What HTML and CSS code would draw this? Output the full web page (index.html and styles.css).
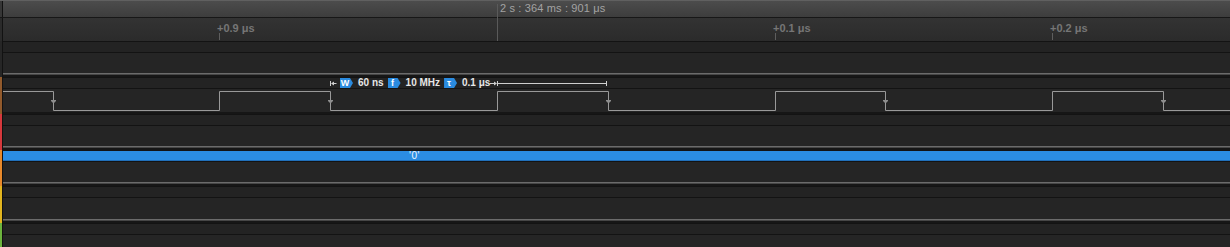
FILE: index.html
```html
<!DOCTYPE html>
<html>
<head>
<meta charset="utf-8">
<link rel="stylesheet" href="styles.css">
</head>
<body>
<div class="screen">
  <div class="hdr">
    <div class="strip"></div>
    <div class="hdr-body"><span class="hdr-time">2 s : 364 ms : 901 μs</span></div>
  </div>
  <div class="ruler">
    <div class="strip"></div>
    <div class="ruler-body"></div>
    <span class="mark" style="--x:219px">+0.9 μs</span>
    <span class="mark" style="--x:775px">+0.1 μs</span>
    <span class="mark" style="--x:1052px">+0.2 μs</span>
  </div>
  <div class="cursor"></div>

  <div class="row h36 c0">
    <div class="strip"></div>
    <div class="track"><div class="band"></div><div class="lane"></div><div class="low"></div></div>
  </div>

  <div class="row h37 c1">
    <div class="strip"></div>
    <div class="track"><div class="band"></div><div class="lane"></div><div class="low none"></div></div>
    <svg class="wave" width="1230" height="37" viewBox="0 0 1230 37">
      <path d="M3 14.5H53.5V33.5H219.5V14.5H330.5V33.5H497.5V14.5H608.5V33.5H775.5V14.5H885.5V33.5H1052.5V14.5H1163.5V33.5H1230" fill="none" stroke="#999999" stroke-width="1"/>
      <g fill="#8e8e8e">
        <path d="M51 23h5v1l-2 2h-1l-2-2z"/>
        <path d="M328 23h5v1l-2 2h-1l-2-2z"/>
        <path d="M606 23h5v1l-2 2h-1l-2-2z"/>
        <path d="M883 23h5v1l-2 2h-1l-2-2z"/>
        <path d="M1161 23h5v1l-2 2h-1l-2-2z"/>
      </g>
      <g stroke="#cfcfcf" fill="none" stroke-width="1">
        <path d="M330.5 4V9"/>
        <path d="M333 6.5H336.5"/>
        <path d="M490 6.5H494"/>
        <path d="M497.5 4V9"/>
        <path d="M498 6.5H606"/>
        <path d="M606.5 4V9"/>
      </g>
      <g fill="#cfcfcf">
        <path d="M331 6.5L334 4.5V8.5Z"/>
        <path d="M497 6.5L494 4.5V8.5Z"/>
      </g>
    </svg>
    <div class="meas">
      <span class="tag">W</span><span class="mtxt">60 ns</span>
      <span class="tag">f</span><span class="mtxt">10 MHz</span>
      <span class="tag">τ</span><span class="mtxt">0.1 μs</span>
    </div>
  </div>

  <div class="row h36 c2">
    <div class="strip"></div>
    <div class="track"><div class="band"></div><div class="lane"></div><div class="low"></div></div>
  </div>

  <div class="row h36 c3">
    <div class="strip"></div>
    <div class="track"><div class="band blue"><span class="byte">'0'</span></div><div class="lane"></div><div class="low"></div></div>
  </div>

  <div class="row h37 c4">
    <div class="strip"></div>
    <div class="track"><div class="band"></div><div class="lane"></div><div class="low"></div></div>
  </div>

  <div class="row grow c5">
    <div class="strip"></div>
    <div class="track"><div class="band"></div><div class="lane"></div></div>
  </div>
</div>
</body>
</html>
```

FILE: styles.css
```css
* { box-sizing: content-box; }
html, body { margin: 0; padding: 0; background: #1c1c1c; }
body { font-family: "Liberation Sans", Arial, sans-serif; }

.screen {
  position: relative;
  width: 1230px;
  height: 247px;
  overflow: hidden;
  display: flex;
  flex-direction: column;
  background: #1c1c1c;
}

.strip {
  width: 2px;
  flex: none;
  border-right: 1px solid #121212;
}

/* header */
.hdr {
  display: flex;
  height: 16px;
  border-top: 1px solid #606060;
  border-bottom: 1px solid #171717;
  flex: none;
}
.hdr .strip { background: #363636; }
.hdr-body {
  flex: 1;
  position: relative;
  background: linear-gradient(#4c4c4c, #3d3d3d);
}
.hdr-time {
  position: absolute;
  left: 497px;
  top: 1px;
  font-size: 11px;
  line-height: 12px;
  letter-spacing: 0.15px;
  color: #a3a3a3;
  white-space: nowrap;
}

/* ruler */
.ruler {
  display: flex;
  position: relative;
  height: 23px;
  flex: none;
}
.ruler .strip { background: #2a2a2a; }
.ruler-body {
  flex: 1;
  background: linear-gradient(#333333, #2b2b2b);
}
.mark {
  position: absolute;
  left: calc(var(--x) - 2px);
  top: 4px;
  font-size: 11px;
  line-height: 12px;
  font-weight: bold;
  color: #767676;
  white-space: nowrap;
}
.mark::after {
  content: "";
  position: absolute;
  left: 2px;
  top: 11px;
  width: 1px;
  height: 7px;
  background: #5e5e5e;
}

.cursor {
  position: absolute;
  left: 497px;
  top: 4px;
  width: 1px;
  height: 37px;
  background: #5a5a5a;
}

/* channel rows */
.row {
  display: flex;
  position: relative;
  flex: none;
}
.h36 { height: 36px; }
.h37 { height: 37px; }
.grow { flex: 1; }

.track {
  flex: 1;
  display: flex;
  flex-direction: column;
}
.band {
  height: 10px;
  border-top: 1px solid #131313;
  border-bottom: 1px solid #131313;
  background: #232323;
  flex: none;
}
.band.blue {
  background: #2b8de2;
  box-shadow: inset 0 -1px 0 #2170ba;
  display: flex;
  align-items: center;
}
.byte {
  margin-left: 406px;
  font-size: 10px;
  line-height: 10px;
  letter-spacing: 0.5px;
  color: #f2f6fb;
}
.lane {
  flex: 1;
  background: #252525;
}
.low {
  height: 2px;
  flex: none;
  border-bottom: 2px solid #161616;
  background: linear-gradient(#6b6b6b 50%, #464646 50%);
}
.low.none { background: #252525; }

.c0 .strip { background: #262626; }
.c1 .strip { background: #925a2c; }
.c2 .strip { background: #d6383c; }
.c3 .strip { background: #e8892b; }
.c4 .strip { background: #e2b51f; }
.c5 .strip { background: #6cb33d; }

.wave {
  position: absolute;
  left: 0;
  top: 0;
}

.meas {
  position: absolute;
  left: 340px;
  top: 1px;
  height: 10px;
  display: flex;
  align-items: center;
}
.tag {
  width: 10px;
  padding-right: 3px;
  height: 10px;
  margin-right: 5px;
  background: #2a8be0;
  clip-path: polygon(0 0, 10px 0, 13px 50%, 10px 100%, 0 100%);
  color: #ffffff;
  font-size: 9px;
  font-weight: bold;
  line-height: 10px;
  text-align: center;
}
.mtxt {
  margin-right: 4px;
  font-size: 10px;
  font-weight: bold;
  line-height: 10px;
  color: #e6e6e6;
  white-space: nowrap;
}
```
